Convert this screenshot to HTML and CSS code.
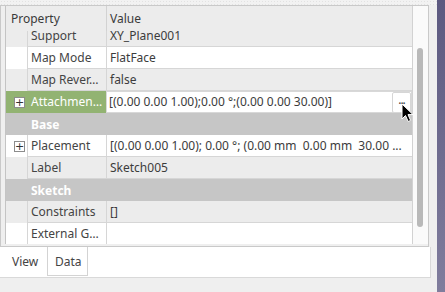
FILE: index.html
```html
<!DOCTYPE html>
<html lang="en">
<head>
  <meta charset="UTF-8" />
  <title>Property View</title>
  <link rel="stylesheet" href="styles.css">
</head>
<body>
  <div class="main-col">
    <div class="top-strip"></div>

    <div class="dock">
      <div class="editor">
        <div class="table">
          <div class="grid">
            <div class="head">
              <div class="head-name">Property</div>
              <div class="head-value">Value</div>
            </div>
            <div class="body">
              <div class="rows">
                <div class="row alt">
                  <div class="indent"></div>
                  <div class="name">Support</div>
                  <div class="value">XY_Plane001</div>
                </div>
                <div class="row">
                  <div class="indent"></div>
                  <div class="name">Map Mode</div>
                  <div class="value">FlatFace</div>
                </div>
                <div class="row alt">
                  <div class="indent"></div>
                  <div class="name">Map Rever…</div>
                  <div class="value">false</div>
                </div>
                <div class="row selected">
                  <div class="indent"><span class="expander">+</span></div>
                  <div class="name">Attachmen…</div>
                  <div class="value editing">
                    <span class="edit-text">[(0.00 0.00 1.00);0.00 °;(0.00 0.00 30.00)]</span>
                    <span class="dots-btn">...</span>
                  </div>
                </div>
                <div class="group">Base</div>
                <div class="row">
                  <div class="indent"><span class="expander">+</span></div>
                  <div class="name">Placement</div>
                  <div class="value">[(0.00 0.00 1.00); 0.00 °; (0.00 mm  0.00 mm  30.00 ...</div>
                </div>
                <div class="row alt">
                  <div class="indent"></div>
                  <div class="name">Label</div>
                  <div class="value">Sketch005</div>
                </div>
                <div class="group">Sketch</div>
                <div class="row alt">
                  <div class="indent"></div>
                  <div class="name">Constraints</div>
                  <div class="value">[]</div>
                </div>
                <div class="row">
                  <div class="indent"></div>
                  <div class="name">External G…</div>
                  <div class="value"></div>
                </div>
              </div>
            </div>
          </div>
          <div class="scrollbar"><div class="thumb"></div></div>
        </div>
      </div>

      <div class="tabs">
        <div class="tab active">View</div>
        <div class="tab">Data</div>
      </div>
    </div>

    <div class="status"></div>
  </div>

  <div class="stripe"></div>

  <!-- mouse pointer over the "..." button -->
  <svg class="cursor" width="13" height="20" viewBox="0 0 13 20">
    <path d="M1 1 L1 16 L4.5 12.5 L7.2 18.5 L9.6 17.4 L7 11.6 L12 11.6 Z" fill="#000" stroke="#fff" stroke-width="1" stroke-linejoin="round"/>
  </svg>
</body>
</html>
```

FILE: styles.css
```css
* {
  margin: 0;
  padding: 0;
  box-sizing: border-box;
}

body {
  background: #efefef;
  color: #444;
  font-family: 'Noto Sans', 'Open Sans', sans-serif;
  font-size: 12px;
  width: 445px;
  height: 292px;
  overflow: hidden;
  position: relative;
  display: flex;
}

.main-col {
  width: 437px;
}

.top-strip {
  height: 5px;
  background-color: #f2f2f2;
  background-image: radial-gradient(#e2e2e2 35%, transparent 40%);
  background-size: 3px 3px;
}

.dock {
  width: 431px;
}

.editor {
  width: 429px;
  height: 242px;
  border: 1px solid #c9c9c9;
  padding: 0 0 2px 4px;
  background: #efefef;
}

.table {
  display: flex;
  height: 238px;
  border-left: 1px solid #c4c4c4;
}

.grid {
  width: 406px;
  display: flex;
  flex-direction: column;
}

.head {
  display: flex;
  height: 25px;
  background: #ececec;
  color: #3a3a3a;
  line-height: 26px;
}

.head-name {
  width: 100px;
  padding-left: 5px;
}

.head-value {
  flex: 1;
  border-left: 1px solid #d2d2d2;
  padding-left: 3px;
}

.body {
  height: 213px;
  overflow: hidden;
  background: #fff;
}

.rows {
  margin-top: -6px;
}

.row {
  display: flex;
  height: 22px;
  background: #fff;
}

.row.alt {
  background: #ececec;
}

.indent {
  width: 21px;
  display: flex;
  align-items: center;
  padding-left: 8px;
}

.name {
  width: 79px;
  border-left: 1px solid #d6d6d6;
  border-bottom: 1px solid #d6d6d6;
  padding-left: 3px;
  line-height: 22px;
  white-space: nowrap;
  overflow: hidden;
}

.value {
  flex: 1;
  border-left: 1px solid #d6d6d6;
  border-bottom: 1px solid #d6d6d6;
  padding-left: 3px;
  line-height: 22px;
  white-space: pre;
  overflow: hidden;
  color: #3c3c3c;
}

.expander {
  width: 11px;
  height: 11px;
  border: 1px solid #8c8c8c;
  background: #fff;
  color: #333;
  font-size: 11px;
  line-height: 9px;
  text-align: center;
  font-family: 'DejaVu Sans', sans-serif;
}

.row.selected .indent,
.row.selected .name {
  background: #92b372;
  color: #fff;
}

.row.selected .name {
  border-left: none;
  border-bottom: none;
  padding-left: 4px;
}

.value.editing {
  display: flex;
  align-items: center;
  justify-content: space-between;
  border: 1px solid #d8d8d8;
  padding-left: 2px;
  padding-right: 0;
}

.dots-btn {
  width: 19px;
  height: 21px;
  border: 1px solid #d6d6d6;
  border-radius: 2px;
  background: #fff;
  line-height: 14px;
  text-align: center;
  letter-spacing: -1px;
}

.group {
  height: 22px;
  background: #c6c6c6;
  color: #fff;
  font-weight: bold;
  line-height: 23px;
  padding-left: 25px;
}

.scrollbar {
  width: 16px;
  border-left: 1px solid #d2d2d2;
  background: #fafafa;
  padding: 42px 0 0 4px;
}

.thumb {
  width: 6px;
  height: 179px;
  background: #b9b9b9;
  border-radius: 3px;
}

.tabs {
  display: flex;
  height: 31px;
  background: #fff;
  border-right: 1px solid #d9d9d9;
  border-bottom: 1px solid #d9d9d9;
  padding-left: 5px;
}

.tab {
  width: 42px;
  height: 29px;
  line-height: 29px;
  padding-left: 7px;
  color: #444;
}

.tab:not(.active) {
  width: 41px;
  border: 1px solid #d3d3d3;
  border-top: none;
  padding-left: 7px;
}

.status {
  height: 14px;
}

.stripe {
  width: 8px;
  height: 292px;
  background: linear-gradient(#5c5980, #807d9d);
}

.cursor {
  position: absolute;
  left: 401px;
  top: 103px;
}
```
